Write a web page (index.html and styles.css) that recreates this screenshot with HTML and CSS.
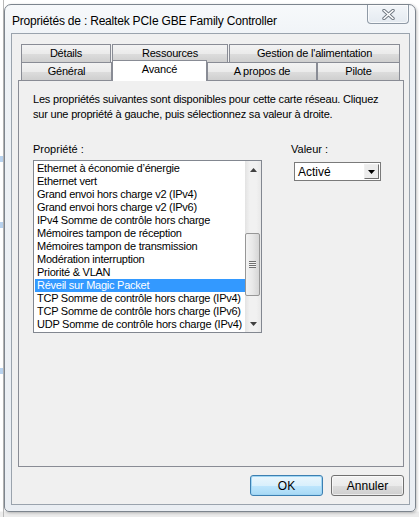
FILE: index.html
```html
<!DOCTYPE html>
<html lang="fr">

<head>
  <meta charset="UTF-8">
  <meta name="viewport" content="width=device-width, initial-scale=1.0">
  <title>Propriétés de : Realtek PCIe GBE Family Controller</title>
  <link rel="stylesheet" href="styles.css">
</head>

<body>
  <div class="desk">
    <div class="desk-edge">
      <span class="spot spot-1"></span>
      <span class="spot spot-2"></span>
      <span class="spot spot-3"></span>
    </div>
    <div class="window">
      <div class="titlebar">
        <span class="title">Propriétés de : Realtek PCIe GBE Family Controller</span>
        <a class="close" href="javascript:;">
          <svg width="13" height="11" viewBox="0 0 13 11">
            <path d="M2 1.5 L11 9.5 M11 1.5 L2 9.5" stroke="#6f7780" stroke-width="3.4" stroke-linecap="round" />
            <path d="M2 1.5 L11 9.5 M11 1.5 L2 9.5" stroke="#fff" stroke-width="1.6" stroke-linecap="round" />
          </svg>
        </a>
      </div>
      <div class="client">
        <div class="tabs">
          <ul class="tab-row">
            <li class="tab t-details">Détails</li>
            <li class="tab t-res">Ressources</li>
            <li class="tab t-power">Gestion de l'alimentation</li>
          </ul>
          <ul class="tab-row">
            <li class="tab t-general">Général</li>
            <li class="tab t-adv active">Avancé</li>
            <li class="tab t-about">A propos de</li>
            <li class="tab t-driver">Pilote</li>
          </ul>
        </div>
        <div class="panel">
          <p class="intro">Les propriétés suivantes sont disponibles pour cette carte réseau. Cliquez<br>sur une propriété à gauche, puis sélectionnez sa valeur à droite.</p>
          <div class="fields">
            <div class="col-prop">
              <p class="label">Propriété :</p>
              <div class="listbox">
                <ul class="items">
                  <li>Ethernet à économie d’énergie</li>
                  <li>Ethernet vert</li>
                  <li>Grand envoi hors charge v2 (IPv4)</li>
                  <li>Grand envoi hors charge v2 (IPv6)</li>
                  <li>IPv4 Somme de contrôle hors charge</li>
                  <li>Mémoires tampon de réception</li>
                  <li>Mémoires tampon de transmission</li>
                  <li>Modération interruption</li>
                  <li>Priorité &amp; VLAN</li>
                  <li class="selected">Réveil sur Magic Packet</li>
                  <li>TCP Somme de contrôle hors charge (IPv4)</li>
                  <li>TCP Somme de contrôle hors charge (IPv6)</li>
                  <li>UDP Somme de contrôle hors charge (IPv4)</li>
                </ul>
                <div class="scrollbar">
                  <div class="sb-arrow">
                    <svg width="7" height="4" viewBox="0 0 7 4"><path d="M0 4 L3.5 0 L7 4 Z" fill="#404040" /></svg>
                  </div>
                  <div class="sb-track">
                    <div class="sb-thumb"><span class="grip"></span></div>
                  </div>
                  <div class="sb-arrow">
                    <svg width="7" height="4" viewBox="0 0 7 4"><path d="M0 0 L7 0 L3.5 4 Z" fill="#404040" /></svg>
                  </div>
                </div>
              </div>
            </div>
            <div class="col-val">
              <p class="label">Valeur :</p>
              <div class="combo">
                <span class="combo-text">Activé</span>
                <span class="combo-btn">
                  <svg width="7" height="4" viewBox="0 0 7 4"><path d="M0 0 L7 0 L3.5 4 Z" fill="#000" /></svg>
                </span>
              </div>
            </div>
          </div>
        </div>
        <div class="buttons">
          <button class="btn btn-default">OK</button>
          <button class="btn">Annuler</button>
        </div>
      </div>
    </div>
  </div>
</body>

</html>
```

FILE: styles.css
```css
html,
body {
  margin: 0;
  width: 419px;
  height: 517px;
  overflow: hidden;
}

body {
  background: #fff;
  font-family: "Liberation Sans", Arial, sans-serif;
  font-size: 11px;
  color: #000;
}

p,
ul {
  margin: 0;
}

ul {
  padding-left: 0;
  list-style: none;
}

.desk {
  display: flex;
  height: 100%;
  background: linear-gradient(to bottom, #fff 0, #fff 511px, #ececec 512px);
}

/* strip of desktop visible left of the window */
.desk-edge {
  width: 3px;
  border-right: 1px solid #b9b9b9;
  display: flex;
  flex-direction: column;
}

.spot {
  width: 3px;
  height: 6px;
  background: #b8d2ee;
}

.spot-1 {
  margin-top: 156px;
}

.spot-2 {
  margin-top: 60px;
}

.spot-3 {
  margin-top: 140px;
}

.window {
  box-sizing: border-box;
  width: 412px;
  height: 508px;
  margin-top: 4px;
  border: 1px solid #7d858e;
  border-radius: 7px 7px 5px 5px;
  background: linear-gradient(to bottom, #f7f9fb, #eef2f6 40px, #eaeef3);
  box-shadow: 1px 1px 3px rgba(0, 0, 0, 0.25);
}

.titlebar {
  display: flex;
  justify-content: space-between;
  height: 28px;
}

.title {
  padding: 9px 0 0 7px;
  font-size: 12px;
  letter-spacing: -0.2px;
  line-height: 15px;
}

.close {
  display: flex;
  align-items: center;
  justify-content: center;
  box-sizing: border-box;
  width: 42px;
  height: 19px;
  margin-right: 6px;
  border: 1px solid #8f9aa6;
  border-top: none;
  border-radius: 0 0 4px 4px;
  background: linear-gradient(to bottom, #f3f6f9, #e4eaf0);
  box-shadow: inset 0 0 0 1px rgba(255, 255, 255, 0.7);
}

.client {
  box-sizing: border-box;
  height: 472px;
  margin: 0 5px 0 6px;
  padding: 10px 5px 0 6px;
  border: 1px solid #9aa3ad;
  background: #f0f0f0;
}

.tabs {
  padding-left: 3px;
}

.tab-row {
  display: flex;
  height: 18px;
}

.tab {
  box-sizing: border-box;
  height: 18px;
  border: 1px solid #898c95;
  border-bottom: none;
  background: linear-gradient(to bottom, #f3f3f3, #ebebeb 50%, #dddddd 51%, #cfcfcf);
  text-align: center;
  line-height: 16px;
  font-size: 11px;
  letter-spacing: -0.2px;
}

.t-details {
  width: 90px;
  margin-right: 1px;
}

.t-res {
  width: 116px;
  margin-right: 1px;
}

.t-power {
  width: 171px;
}

.t-general {
  width: 91px;
}

.t-adv {
  width: 95px;
}

.t-about {
  width: 110px;
}

.t-driver {
  width: 83px;
}

.tab.active {
  position: relative;
  z-index: 1;
  height: 21px;
  margin-top: -2px;
  background: #fff;
  line-height: 17px;
}

.panel {
  box-sizing: border-box;
  height: 387px;
  padding: 11px 0 0 14px;
  border: 1px solid #898c95;
  background: #f0f0f0;
}

.intro {
  line-height: 15px;
  letter-spacing: -0.2px;
}

.fields {
  display: flex;
  gap: 29px;
  margin-top: 20px;
}

.label {
  line-height: 15px;
}

.listbox {
  display: flex;
  box-sizing: border-box;
  width: 229px;
  height: 173px;
  margin-top: 3px;
  border: 1px solid #828790;
  background: #fff;
}

.items {
  width: 211px;
  padding-top: 1px;
}

.items>li {
  height: 13px;
  margin-left: 1px;
  padding-left: 2px;
  line-height: 13px;
  letter-spacing: -0.25px;
  white-space: nowrap;
}

.items>li.selected {
  background: #3399ff;
  color: #fff;
}

.scrollbar {
  display: flex;
  flex-direction: column;
  width: 16px;
  background: linear-gradient(to right, #e3e3e3, #f1f1f1 30%, #f1f1f1 70%, #e8e8e8);
}

.sb-arrow {
  display: flex;
  align-items: center;
  justify-content: center;
  height: 17px;
}

.sb-track {
  flex: 1;
  padding-top: 55px;
}

.sb-thumb {
  display: flex;
  align-items: center;
  justify-content: center;
  box-sizing: border-box;
  width: 15px;
  height: 63px;
  border: 1px solid #979797;
  border-radius: 2px;
  background: linear-gradient(to right, #f3f3f3, #e8e8e8 50%, #d6d6d6);
}

.grip {
  width: 7px;
  height: 7px;
  background: repeating-linear-gradient(to bottom, #707070 0, #707070 1px, #f4f4f4 1px, #f4f4f4 2px);
}

.col-val .label {
  margin-bottom: 5px;
}

.combo {
  display: flex;
  justify-content: space-between;
  align-items: center;
  box-sizing: border-box;
  width: 87px;
  height: 19px;
  margin-left: 3px;
  padding: 0 1px 0 3px;
  border: 1px solid #7a7a7a;
  background: #fff;
  font-size: 12px;
}

.combo-btn {
  display: flex;
  align-items: center;
  justify-content: center;
  box-sizing: border-box;
  width: 15px;
  height: 15px;
  border: 1px solid;
  border-color: #f0f0f0 #6e6e6e #6e6e6e #f0f0f0;
  background: #ececec;
}

.buttons {
  display: flex;
  justify-content: flex-end;
  gap: 8px;
  margin-top: 8px;
}

.btn {
  box-sizing: border-box;
  width: 73px;
  height: 21px;
  padding: 0;
  border: 1px solid #707070;
  border-radius: 3px;
  background: linear-gradient(to bottom, #f2f2f2, #ebebeb 50%, #dddddd 51%, #cfcfcf);
  box-shadow: inset 0 0 0 1px rgba(255, 255, 255, 0.6);
  font-family: "Liberation Sans", Arial, sans-serif;
  font-size: 12px;
  color: #000;
}

.btn-default {
  border-color: #3c7fb1;
  background: linear-gradient(to bottom, #eaf6fd, #d9f0fc 50%, #bee6fd 51%, #a7d9f5);
  box-shadow: inset 0 0 0 1px #a0d6f4;
}
```
